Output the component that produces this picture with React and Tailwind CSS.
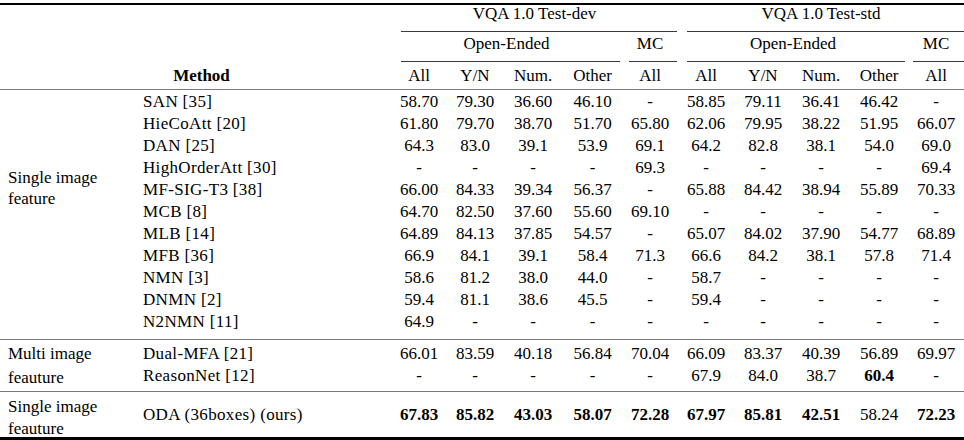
import React from "react";

const COLS = "grid-cols-[135px_256px_56px_56px_60px_59px_56px_56px_58px_58px_58px_56px]";
const RCOLS = "grid-cols-[256px_56px_56px_60px_59px_56px_56px_58px_58px_58px_56px]";

const sec1 = [
  ["SAN [35]", ["58.70", "79.30", "36.60", "46.10", "-", "58.85", "79.11", "36.41", "46.42", "-"]],
  ["HieCoAtt [20]", ["61.80", "79.70", "38.70", "51.70", "65.80", "62.06", "79.95", "38.22", "51.95", "66.07"]],
  ["DAN [25]", ["64.3", "83.0", "39.1", "53.9", "69.1", "64.2", "82.8", "38.1", "54.0", "69.0"]],
  ["HighOrderAtt [30]", ["-", "-", "-", "-", "69.3", "-", "-", "-", "-", "69.4"]],
  ["MF-SIG-T3 [38]", ["66.00", "84.33", "39.34", "56.37", "-", "65.88", "84.42", "38.94", "55.89", "70.33"]],
  ["MCB [8]", ["64.70", "82.50", "37.60", "55.60", "69.10", "-", "-", "-", "-", "-"]],
  ["MLB [14]", ["64.89", "84.13", "37.85", "54.57", "-", "65.07", "84.02", "37.90", "54.77", "68.89"]],
  ["MFB [36]", ["66.9", "84.1", "39.1", "58.4", "71.3", "66.6", "84.2", "38.1", "57.8", "71.4"]],
  ["NMN [3]", ["58.6", "81.2", "38.0", "44.0", "-", "58.7", "-", "-", "-", "-"]],
  ["DNMN [2]", ["59.4", "81.1", "38.6", "45.5", "-", "59.4", "-", "-", "-", "-"]],
  ["N2NMN [11]", ["64.9", "-", "-", "-", "-", "-", "-", "-", "-", "-"]],
];

const sec2 = [
  ["Dual-MFA [21]", ["66.01", "83.59", "40.18", "56.84", "70.04", "66.09", "83.37", "40.39", "56.89", "69.97"]],
  ["ReasonNet [12]", ["-", "-", "-", "-", "-", "67.9", "84.0", "38.7", "*60.4", "-"]],
];

const sec3 = [
  ["ODA (36boxes) (ours)", ["*67.83", "*85.82", "*43.03", "*58.07", "*72.28", "*67.97", "*85.81", "*42.51", "58.24", "*72.23"]],
];

function Cell({ v }) {
  const bold = v.startsWith("*");
  return (
    <div className={bold ? "text-center font-bold" : "text-center"}>{bold ? v.slice(1) : v}</div>
  );
}

function Rows({ rows }) {
  return rows.map(([name, vals]) => (
    <React.Fragment key={name}>
      <div className="pl-2 whitespace-nowrap tracking-[0.02em]">{name}</div>
      {vals.map((v, i) => (
        <Cell key={i} v={v} />
      ))}
    </React.Fragment>
  ));
}

export default function App() {
  return (
    <div className="w-[964px] overflow-hidden bg-white font-['Liberation_Serif','Times_New_Roman',serif] text-[17px] text-black">
      {/* top rule */}
      <div className="pt-[3px]">
        <div className="h-[2px] bg-black" />
      </div>

      {/* header row 1 */}
      <div className={`grid h-[27px] ${COLS}`}>
        <div className="col-span-2" />
        <div className="col-span-5 flex flex-col">
          <div className="text-center leading-[18px]">VQA 1.0 Test-dev</div>
          <div className="mt-auto ml-[10px] mr-[1px] h-px bg-[#3a3a3a]" />
        </div>
        <div className="col-span-5 flex flex-col">
          <div className="text-center leading-[18px]">VQA 1.0 Test-std</div>
          <div className="mt-auto ml-[9px] h-px bg-[#3a3a3a]" />
        </div>
      </div>

      {/* header row 2 */}
      <div className={`grid h-[30px] ${COLS}`}>
        <div className="col-span-2" />
        <div className="col-span-4 flex flex-col pt-[3px]">
          <div className="text-center leading-[18px]">Open-Ended</div>
          <div className="mt-auto ml-[10px] mr-[2px] h-px bg-[#3a3a3a]" />
        </div>
        <div className="flex flex-col pt-[3px]">
          <div className="text-center leading-[18px]">MC</div>
          <div className="mt-auto ml-[7px] mr-[1px] h-px bg-[#3a3a3a]" />
        </div>
        <div className="col-span-4 flex flex-col pt-[3px]">
          <div className="text-center leading-[18px]">Open-Ended</div>
          <div className="mt-auto ml-[9px] mr-[3px] h-px bg-[#3a3a3a]" />
        </div>
        <div className="flex flex-col pt-[3px]">
          <div className="text-center leading-[18px]">MC</div>
          <div className="mt-auto ml-[5px] h-px bg-[#3a3a3a]" />
        </div>
      </div>

      {/* header row 3 */}
      <div className={`grid h-[27px] pt-[5px] leading-[18px] ${COLS}`}>
        <div className="col-span-2 pl-[12px] text-center font-bold">Method</div>
        {["All", "Y/N", "Num.", "Other", "All", "All", "Y/N", "Num.", "Other", "All"].map((h, i) => (
          <div key={i} className="text-center">
            {h}
          </div>
        ))}
      </div>

      <div className="h-px bg-[#7a7a7a]" />

      {/* section 1 */}
      <div className="flex h-[249px]">
        <div className="w-[135px] shrink-0 pl-2 pt-[77px] leading-[21px]">
          <div>Single image</div>
          <div>feature</div>
        </div>
        <div className={`grid flex-1 auto-rows-[22px] content-start pt-[1px] leading-[22px] ${RCOLS}`}>
          <Rows rows={sec1} />
        </div>
      </div>

      <div className="h-px bg-[#7a7a7a]" />

      {/* section 2 */}
      <div className="flex h-[51px]">
        <div className="w-[135px] shrink-0 pl-2 pt-[2px] leading-[24px]">
          <div>Multi image</div>
          <div>feauture</div>
        </div>
        <div className={`grid flex-1 auto-rows-[22px] content-start pt-[3px] leading-[22px] ${RCOLS}`}>
          <Rows rows={sec2} />
        </div>
      </div>

      <div className="h-px bg-[#7a7a7a]" />

      {/* section 3 */}
      <div className="flex h-[45px]">
        <div className="w-[135px] shrink-0 pl-2 pt-[4px] leading-[22px]">
          <div>Single image</div>
          <div>feauture</div>
        </div>
        <div className={`grid flex-1 auto-rows-[22px] content-start pt-[12px] leading-[22px] ${RCOLS}`}>
          <Rows rows={sec3} />
        </div>
      </div>

      {/* bottom rule */}
      <div className="h-[3px] bg-black" />
    </div>
  );
}
